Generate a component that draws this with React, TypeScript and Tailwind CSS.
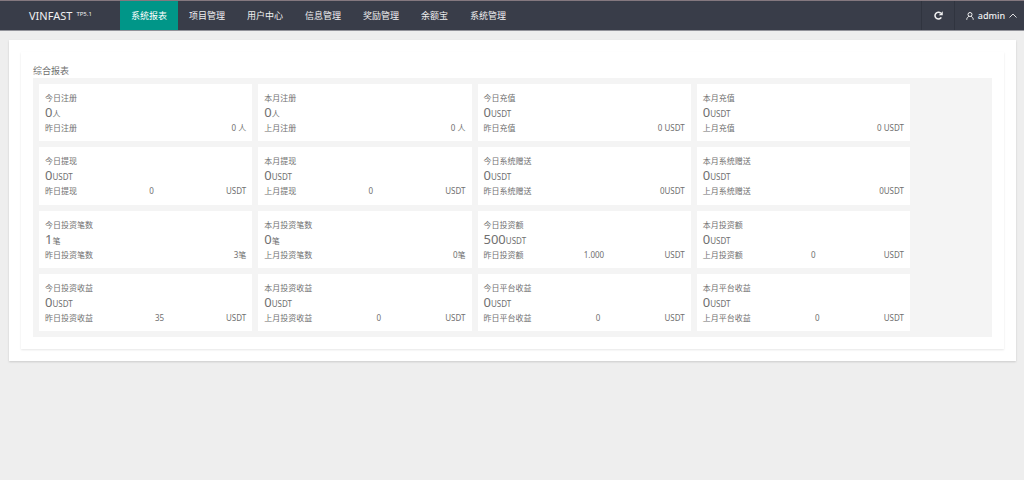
type Stat = {
  title: string;
  value: string;
  unit: string;
  previous: string;
  parts: string[];
};

const stats: Stat[] = [
  { title: "今日注册", value: "0", unit: "人", previous: "昨日注册", parts: ["0 人"] },
  { title: "本月注册", value: "0", unit: "人", previous: "上月注册", parts: ["0 人"] },
  { title: "今日充值", value: "0", unit: "USDT", previous: "昨日充值", parts: ["0 USDT"] },
  { title: "本月充值", value: "0", unit: "USDT", previous: "上月充值", parts: ["0 USDT"] },
  { title: "今日提现", value: "0", unit: "USDT", previous: "昨日提现", parts: ["0", "USDT"] },
  { title: "本月提现", value: "0", unit: "USDT", previous: "上月提现", parts: ["0", "USDT"] },
  { title: "今日系统赠送", value: "0", unit: "USDT", previous: "昨日系统赠送", parts: ["0USDT"] },
  { title: "本月系统赠送", value: "0", unit: "USDT", previous: "上月系统赠送", parts: ["0USDT"] },
  { title: "今日投资笔数", value: "1", unit: "笔", previous: "昨日投资笔数", parts: ["3笔"] },
  { title: "本月投资笔数", value: "0", unit: "笔", previous: "上月投资笔数", parts: ["0笔"] },
  { title: "今日投资额", value: "500", unit: "USDT", previous: "昨日投资额", parts: ["1.000", "USDT"] },
  { title: "本月投资额", value: "0", unit: "USDT", previous: "上月投资额", parts: ["0", "USDT"] },
  { title: "今日投资收益", value: "0", unit: "USDT", previous: "昨日投资收益", parts: ["35", "USDT"] },
  { title: "本月投资收益", value: "0", unit: "USDT", previous: "上月投资收益", parts: ["0", "USDT"] },
  { title: "今日平台收益", value: "0", unit: "USDT", previous: "昨日平台收益", parts: ["0", "USDT"] },
  { title: "本月平台收益", value: "0", unit: "USDT", previous: "上月平台收益", parts: ["0", "USDT"] },
];

const menu = ["系统报表", "项目管理", "用户中心", "信息管理", "奖励管理", "余额宝", "系统管理"];

function RefreshIcon() {
  return (
    <svg viewBox="0 0 16 16" className="size-[9px]" fill="none" stroke="currentColor" strokeWidth="2.8" aria-hidden="true">
      <path d="M13 11.200A6 6 0 1 1 12 3.800" />
      <path d="M15.500 0.500v7H8.500z" fill="currentColor" stroke="none" />
    </svg>
  );
}

function UserIcon() {
  return (
    <svg viewBox="0 0 16 16" className="size-2" fill="none" stroke="currentColor" strokeWidth="2" aria-hidden="true">
      <circle cx="8" cy="5" r="4" />
      <path d="M1.5 15.5c0-3.6 2-5.8 4.5-6.8M14.5 15.5c0-3.6-2-5.8-4.5-6.8" />
    </svg>
  );
}

function ChevronUpIcon() {
  return (
    <svg viewBox="0 0 16 10" className="h-[5px] w-2" fill="none" stroke="currentColor" strokeWidth="1.8" aria-hidden="true">
      <path d="M1 9l7-7 7 7" />
    </svg>
  );
}

function Header() {
  return (
    <header className="flex h-[31px] border-t border-b border-t-[#84787f] border-b-[#92939a] bg-[#393d49] text-[9px] text-[#f0f0f1]">
      <a href="#home" className="flex w-[120px] items-center gap-1 pl-[29px] text-[11px] leading-4">
        VINFAST
        <sup className="top-0 mb-1 text-[6px] leading-2">TP5.1</sup>
      </a>
      <nav className="flex flex-1">
        {menu.map((item, index) => (
          <a
            key={item}
            href={"#menu-" + index}
            className={
              index === 0
                ? "flex items-center bg-[#009688] px-[11px] text-white"
                : "flex items-center px-[11px]"
            }
          >
            {item}
          </a>
        ))}
      </nav>
      <button type="button" aria-label="刷新" className="flex w-[33px] items-center justify-center border-l border-[#30343f]">
        <RefreshIcon />
      </button>
      <button type="button" className="flex w-[70px] items-center justify-center gap-1 border-l border-[#30343f] pl-1">
        <UserIcon />
        <span className="font-medium">admin</span>
        <ChevronUpIcon />
      </button>
    </header>
  );
}

function StatCard({ stat }: { stat: Stat }) {
  return (
    <article className="flex flex-col justify-center bg-white px-1.5 pt-px text-[8px] leading-3">
      <h2>{stat.title}</h2>
      <p className="mb-0.5 h-4 leading-4">
        <span className="text-[13px]">{stat.value}</span>
        {stat.unit}
      </p>
      <p className="flex justify-between whitespace-pre">
        <span>{stat.previous}</span>
        {stat.parts.map((part) => (
          <span key={part}>{part}</span>
        ))}
      </p>
    </article>
  );
}

export default function App() {
  return (
    <div className="min-h-screen bg-[#eeeeee] font-['Noto_Sans','Noto_Sans_CJK_SC',sans-serif] text-[#707070]">
      <Header />
      <main className="pt-[9px] pr-2 pl-[9px]">
        <div className="bg-white p-3 shadow-[0_1px_2px_rgba(0,0,0,0.15)]">
          <section className="p-3 shadow-[0_1px_2px_rgba(0,0,0,0.1)]">
            <h1 className="h-[14px] text-[9px] leading-[14px]">综合报表</h1>
            <div className="grid min-h-[259px] grid-cols-4 gap-1.5 bg-[#f4f4f4] p-1.5 pr-[82px]">
              {stats.map((stat) => (
                <StatCard key={stat.title} stat={stat} />
              ))}
            </div>
          </section>
        </div>
      </main>
    </div>
  );
}
